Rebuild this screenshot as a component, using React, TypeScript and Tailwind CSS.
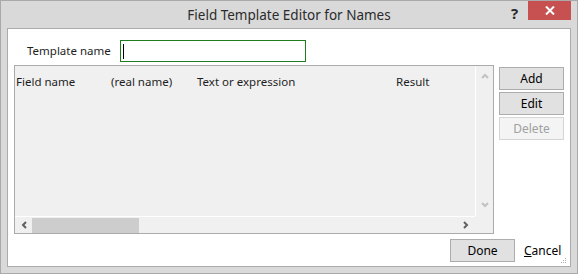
const font = { fontFamily: '"Segoe UI", "Noto Sans", "Open Sans", sans-serif' };

function Chevron({ dir, color }: { dir: 'up' | 'down' | 'left' | 'right'; color: string }) {
  const paths = {
    up: 'M1 5 L4 2 L7 5',
    down: 'M1 2 L4 5 L7 2',
    left: 'M5 1 L2 4 L5 7',
    right: 'M2 1 L5 4 L2 7'
  } as const;
  return (
    <svg width="8" height="8" viewBox="0 0 8 8">
      <path d={paths[dir]} fill="none" stroke={color} strokeWidth="2" />
    </svg>
  );
}

function WinButton({ label, disabled = false }: { label: string; disabled?: boolean }) {
  return (
    <div
      className={`w-[65px] h-[23px] flex items-center justify-center text-[12px] border ${
        disabled ? 'border-[#d5d5d5] bg-[#f4f4f4] text-[#a0a0a0]' : 'border-[#adadad] bg-[#e1e1e1] text-black'
      }`}
    >
      {label}
    </div>
  );
}

function FieldList() {
  const columns = [
    { title: 'Field name', w: 'w-[95px]' },
    { title: '(real name)', w: 'w-[86px]' },
    { title: 'Text or expression', w: 'w-[199px]' },
    { title: 'Result', w: 'w-[70px]' }
  ];
  return (
    <div className="w-[480px] h-[169px] border border-[#ababab] bg-[#f0f0f0] flex">
      <div className="flex-1 flex flex-col">
        <div className="flex-1 pl-[1px] pt-[7px] overflow-hidden">
          <div className="flex text-[11.5px] text-[#1e1e1e] whitespace-nowrap">
            {columns.map((c) => (
              <div key={c.title} className={c.w}>
                {c.title}
              </div>
            ))}
          </div>
        </div>
        <div className="h-[17px] border-t border-white flex items-center">
          <div className="w-[17px] flex justify-center pl-[2px]">
            <Chevron dir="left" color="#606060" />
          </div>
          <div className="w-[107px] h-[15px] bg-[#cdcdcd]" />
          <div className="flex-1" />
          <div className="w-[17px] flex justify-center pr-[2px]">
            <Chevron dir="right" color="#606060" />
          </div>
        </div>
      </div>
      <div className="w-[18px] flex flex-col">
        <div className="flex-1 border-l border-white flex flex-col items-center justify-between py-[7px]">
          <Chevron dir="up" color="#c2c2c2" />
          <Chevron dir="down" color="#c2c2c2" />
        </div>
        <div className="h-[17px]" />
      </div>
    </div>
  );
}

export default function App() {
  return (
    <div
      className="w-[578px] h-[274px] border border-[#a9a9a9] bg-[#d9d9d9] flex flex-col select-none"
      style={font}
    >
      <div className="h-[27px] relative flex items-center justify-center">
        <span className="text-[13.5px] text-[#2b2b2b] pt-[2px]">Field Template Editor for Names</span>
        <span className="absolute left-[510px] top-[1px] text-[15px] font-bold text-[#2b2b2b]">?</span>
        <div className="absolute left-[527px] top-0 w-[43px] h-[19px] bg-[#c75050] flex items-center justify-center">
          <svg width="10" height="9" viewBox="0 0 10 9">
            <path d="M1 0.5 L9 8.5 M9 0.5 L1 8.5" stroke="#fff" strokeWidth="2" />
          </svg>
        </div>
      </div>
      <div className="mx-[6px] mb-[6px] flex-1 border border-[#ababab] bg-white flex flex-col pl-[6px] relative">
        <div className="flex items-center mt-[11px]">
          <div className="w-[106px] pl-[13px] text-[11.5px] text-[#1e1e1e]">Template name</div>
          <div className="w-[186px] h-[22px] border border-[#1e7d1e] flex items-center pl-[2px]">
            <div className="w-[1px] h-[15px] bg-black" />
          </div>
        </div>
        <div className="flex mt-[3px]">
          <FieldList />
          <div className="ml-[5px] mt-[2px] flex flex-col gap-[2px]">
            <WinButton label="Add" />
            <WinButton label="Edit" />
            <WinButton label="Delete" disabled />
          </div>
        </div>
        <div className="flex items-center mt-[5px] ml-[436px]">
          <WinButton label="Done" />
          <span className="ml-[9px] text-[12px] text-black">
            <span className="underline">C</span>ancel
          </span>
        </div>
        <svg className="absolute right-[3px] bottom-[1px]" width="7" height="7" viewBox="0 0 7 7">
          <rect x="5" y="0" width="1" height="1" fill="#b0b0b0" />
          <rect x="5" y="2" width="1" height="1" fill="#b0b0b0" />
          <rect x="3" y="2" width="1" height="1" fill="#b0b0b0" />
          <rect x="5" y="4" width="1" height="1" fill="#b0b0b0" />
          <rect x="3" y="4" width="1" height="1" fill="#b0b0b0" />
          <rect x="1" y="4" width="1" height="1" fill="#b0b0b0" />
        </svg>
      </div>
    </div>
  );
}
